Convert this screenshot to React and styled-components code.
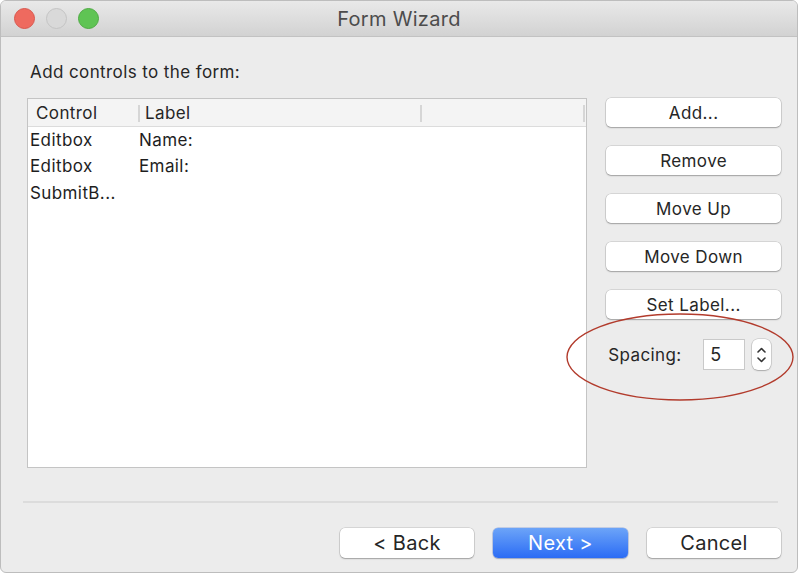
import React from 'react';
import styled, { createGlobalStyle } from 'styled-components';

const GlobalStyle = createGlobalStyle`
  html, body {
    margin: 0;
    padding: 0;
    background: #ffffff;
  }
  body {
    font-family: "Inter", "Liberation Sans", sans-serif;
  }
`;

const Window = styled.div`
  position: relative;
  box-sizing: border-box;
  width: 798px;
  height: 573px;
  background: #ececec;
  border: 1px solid #bdbdbd;
  border-radius: 6px;
  overflow: hidden;
  display: flex;
  flex-direction: column;
`;

const TitleBar = styled.div`
  position: relative;
  height: 35px;
  flex: none;
  display: flex;
  align-items: center;
  padding-left: 13px;
  gap: 11px;
  background: linear-gradient(#e9e9e9, #d2d2d2);
  border-bottom: 1px solid #c2c2c2;
`;

const Light = styled.span`
  width: 21px;
  height: 21px;
  border-radius: 50%;
  box-sizing: border-box;
  background: ${p => p.color};
  border: 1px solid ${p => p.edge};
`;

const Title = styled.div`
  position: absolute;
  left: 0;
  right: 0;
  top: 0;
  bottom: 0;
  display: flex;
  align-items: center;
  justify-content: center;
  font-size: 20px;
  letter-spacing: 0.3px;
  color: #4c4c4c;
  pointer-events: none;
`;

const Content = styled.div`
  flex: 1;
  display: flex;
  flex-direction: column;
  padding: 0 16px 0 26px;
  font-size: 17px;
  letter-spacing: 0.4px;
`;

const Prompt = styled.div`
  margin-top: 25px;
  height: 20px;
  color: #262626;
  padding-left: 3px;
`;

const Main = styled.div`
  margin-top: 16px;
  display: flex;
  gap: 19px;
`;

const ListBox = styled.div`
  box-sizing: border-box;
  width: 561px;
  height: 370px;
  background: #ffffff;
  border: 1px solid #c4c4c4;
  display: flex;
  flex-direction: column;
`;

const Header = styled.div`
  height: 27px;
  flex: none;
  display: flex;
  align-items: center;
  background: #f4f4f4;
  border-bottom: 1px solid #dcdcdc;
  color: #262626;
`;

const HeadCell = styled.div`
  box-sizing: border-box;
  width: ${p => p.w}px;
  height: 100%;
  display: flex;
  align-items: center;
  padding-left: ${p => p.pad}px;
  border-right: 2px solid transparent;
  position: relative;
  &::after {
    content: "";
    position: absolute;
    right: -2px;
    top: 6px;
    bottom: 4px;
    width: 2px;
    background: #d6d6d6;
  }
`;

const Row = styled.div`
  display: flex;
  height: 26.3px;
  align-items: center;
  color: #1e1e1e;
`;

const Cell = styled.div`
  width: ${p => p.w}px;
  padding-left: 2px;
  white-space: nowrap;
`;

const Side = styled.div`
  width: 175px;
  display: flex;
  flex-direction: column;
  gap: 19px;
  position: relative;
`;

const Button = styled.button`
  box-sizing: border-box;
  height: 29px;
  width: 100%;
  border: none;
  border-radius: 5px;
  background: #ffffff;
  box-shadow: 0 0 0 0.5px rgba(0, 0, 0, 0.18), 0 1px 1.5px rgba(0, 0, 0, 0.25);
  font-family: inherit;
  font-size: 17px;
  letter-spacing: 0.4px;
  color: #262626;
  padding: 0;
  cursor: pointer;
`;

const SpacingRow = styled.div`
  display: flex;
  align-items: center;
  margin-top: 1px;
  padding-left: 2px;
  height: 31px;
  color: #262626;
`;

const SpacingLabel = styled.span`
  width: 95px;
`;

const NumberBox = styled.div`
  box-sizing: border-box;
  width: 42px;
  height: 31px;
  background: #ffffff;
  border: 1px solid #c9c9c9;
  display: flex;
  align-items: center;
  padding-left: 6px;
  font-size: 18px;
`;

const Stepper = styled.div`
  box-sizing: border-box;
  margin-left: 7px;
  width: 19px;
  height: 31px;
  border-radius: 6px;
  background: #ffffff;
  box-shadow: 0 0 0 0.5px rgba(0, 0, 0, 0.2), 0 1px 1.5px rgba(0, 0, 0, 0.2);
  display: flex;
  align-items: center;
  justify-content: center;
`;

const Divider = styled.div`
  margin: 33px 3px 0 -4px;
  height: 2px;
  background: #dcdcdc;
`;

const Footer = styled.div`
  margin-top: 25px;
  display: flex;
  justify-content: flex-end;
  gap: 19px;
`;

const FooterButton = styled(Button)`
  width: ${p => p.w}px;
  height: 30px;
  font-size: 20px;
  letter-spacing: 0.3px;
  ${p => p.primary && `
    background: linear-gradient(#6ca4f8, #2b6cf5);
    color: #ffffff;
    box-shadow: 0 0 0 0.5px rgba(30, 80, 200, 0.4), 0 1px 1.5px rgba(0, 0, 0, 0.2);
  `}
`;

const Marker = styled.svg`
  position: absolute;
  left: 564px;
  top: 311px;
  pointer-events: none;
`;

const rows = [
  ['Editbox', 'Name:'],
  ['Editbox', 'Email:'],
  ['SubmitB...', ''],
];

const sideButtons = ['Add...', 'Remove', 'Move Up', 'Move Down', 'Set Label...'];

export default function App() {
  return (
    <>
      <GlobalStyle />
      <Window>
        <TitleBar>
          <Light color="#ee6a5f" edge="#d9574d" />
          <Light color="#d9d9d9" edge="#c4c4c4" />
          <Light color="#5fc454" edge="#4eab43" />
          <Title>Form Wizard</Title>
        </TitleBar>
        <Content>
          <Prompt>Add controls to the form:</Prompt>
          <Main>
            <ListBox>
              <Header>
                <HeadCell w={112} pad={8}>Control</HeadCell>
                <HeadCell w={282} pad={5}>Label</HeadCell>
                <HeadCell w={163} pad={5} />
              </Header>
              {rows.map((r, i) => (
                <Row key={i}>
                  <Cell w={107}>{r[0]}</Cell>
                  <Cell w={280}>{r[1]}</Cell>
                </Row>
              ))}
            </ListBox>
            <Side>
              {sideButtons.map(b => (
                <Button key={b}>{b}</Button>
              ))}
              <SpacingRow>
                <SpacingLabel>Spacing:</SpacingLabel>
                <NumberBox>5</NumberBox>
                <Stepper>
                  <svg width="11" height="22" viewBox="0 0 11 22">
                    <path d="M2 8 L5.5 4.5 L9 8" fill="none" stroke="#333" strokeWidth="1.6" strokeLinecap="round" strokeLinejoin="round" />
                    <path d="M2 14 L5.5 17.5 L9 14" fill="none" stroke="#333" strokeWidth="1.6" strokeLinecap="round" strokeLinejoin="round" />
                  </svg>
                </Stepper>
              </SpacingRow>
            </Side>
          </Main>
          <Divider />
          <Footer>
            <FooterButton w={134}>&lt; Back</FooterButton>
            <FooterButton w={135} primary>Next &gt;</FooterButton>
            <FooterButton w={134}>Cancel</FooterButton>
          </Footer>
        </Content>
        <Marker width="232" height="92" viewBox="0 0 232 92">
          <ellipse cx="115" cy="45" rx="113" ry="43" fill="none" stroke="#b23b2c" strokeWidth="1.4" />
        </Marker>
      </Window>
    </>
  );
}
